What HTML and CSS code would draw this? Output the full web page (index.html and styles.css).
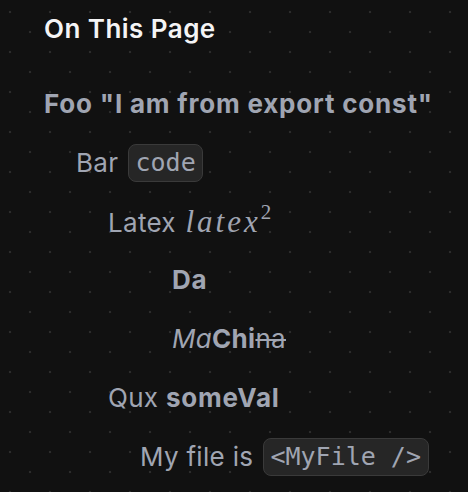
FILE: index.html
```html
<!DOCTYPE html>
<html>
<head>
<meta charset="utf-8">
<link rel="stylesheet" href="styles.css">
</head>
<body>
<nav class="toc">
  <h2 class="toc-title">On This Page</h2>
  <ul class="toc-list">
    <li class="toc-item depth-0 strong">Foo "I am from export const"</li>
    <li class="toc-item depth-1">Bar <code class="code">code</code></li>
    <li class="toc-item depth-2">Latex <span class="math">latex<sup class="sup">2</sup></span></li>
    <li class="toc-item depth-4"><b>Da</b></li>
    <li class="toc-item depth-4"><i>Ma</i><b class="tight">Chi</b><s>na</s></li>
    <li class="toc-item depth-2">Qux <b>someVal</b></li>
    <li class="toc-item depth-3">My file is <code class="code">&lt;MyFile /&gt;</code></li>
  </ul>
</nav>
</body>
</html>
```
FILE: styles.css
```css
html, body {
  margin: 0;
  padding: 0;
}
body {
  width: 468px;
  height: 492px;
  overflow: hidden;
  background-color: #111111;
  background-image:
    radial-gradient(circle at 10px 12px, #2c2c2c 1.2px, transparent 1.6px),
    radial-gradient(circle at 30px 32px, #2c2c2c 1.2px, transparent 1.6px);
  background-size: 40px 40px;
  font-family: Inter, "Noto Sans", sans-serif;
  color: #a0a5b2;
}
.toc {
  padding: 9px 0 0 44px;
}
.toc-title {
  margin: 0;
  font-size: 26px;
  line-height: 40px;
  height: 40px;
  font-weight: 600;
  letter-spacing: 0.45px;
  color: #f4f4f5;
}
.toc-list {
  list-style: none;
  margin: 0;
  padding: 0;
}
.toc-item {
  font-size: 26px;
  line-height: 40px;
  height: 40px;
  margin-top: 18.8px;
  white-space: nowrap;
  letter-spacing: 0.3px;
}
.toc-item:first-child {
  margin-top: 35px;
}
.strong { font-weight: 700; letter-spacing: 0.8px; }
.depth-1 { padding-left: 32px; }
.depth-2 { padding-left: 64px; }
.depth-3 { padding-left: 96px; }
.depth-4 { padding-left: 128px; }
.toc-item b { font-weight: 700; letter-spacing: 0.8px; }
.toc-item b.tight { letter-spacing: 0.3px; }
.toc-item s { text-decoration-thickness: 1.5px; }
.code {
  display: inline-block;
  vertical-align: middle;
  font-family: "DejaVu Sans Mono", "Liberation Mono", monospace;
  font-size: 25px;
  letter-spacing: 0;
  line-height: 36px;
  padding: 0 6.6px;
  margin-left: 2px;
  background: #262626;
  border: 1px solid #3a3a3a;
  border-radius: 8px;
  position: relative;
  top: -2px;
}
.math {
  font-family: "Liberation Serif", "DejaVu Serif", serif;
  font-style: italic;
  font-size: 31px;
  letter-spacing: 3px;
  margin-left: 2px;
}
.sup {
  font-style: normal;
  font-size: 21px;
  letter-spacing: 0;
  vertical-align: 0;
  position: relative;
  top: -13px;
  margin-left: 0;
}
```
